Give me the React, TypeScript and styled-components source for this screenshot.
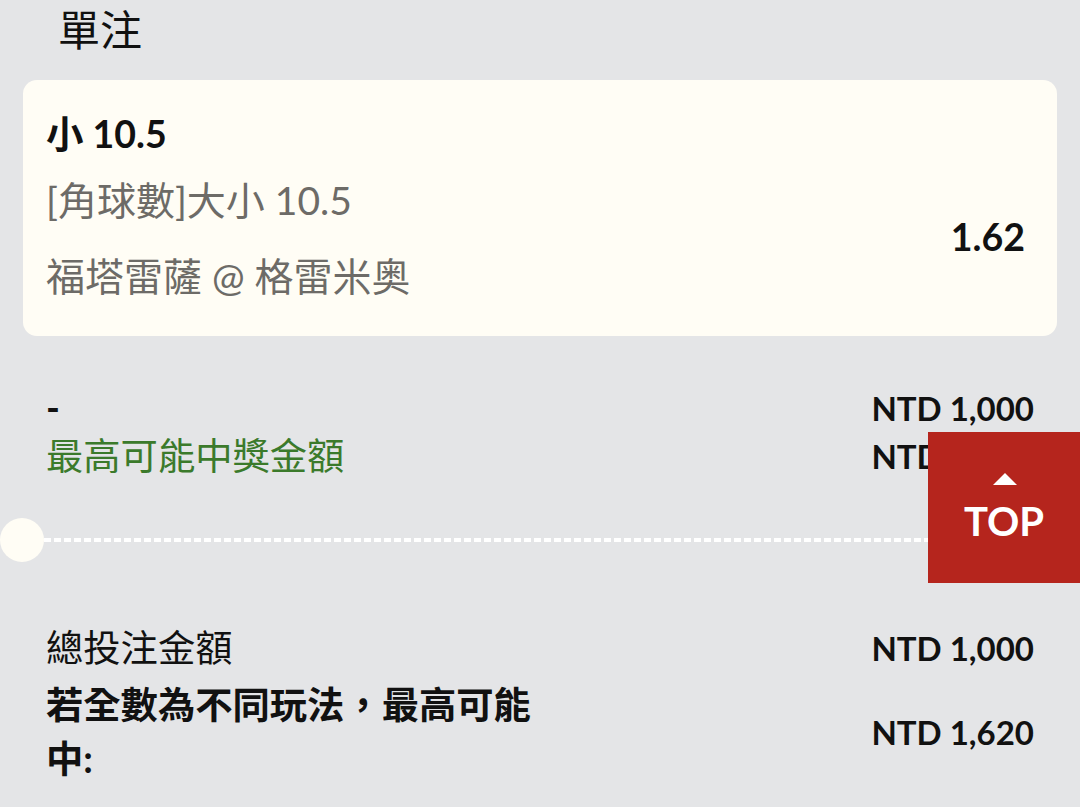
import React from 'react';
import styled, { createGlobalStyle } from 'styled-components';

const GlobalStyle = createGlobalStyle`
  html, body {
    margin: 0;
    padding: 0;
    background: #e4e5e7;
  }
  body {
    font-family: Lato, 'Noto Sans CJK TC', sans-serif;
    color: #111;
    overflow: hidden;
  }
`;

const Page = styled.div`
  width: 1080px;
  height: 807px;
  position: relative;
  overflow: hidden;
`;

const Title = styled.div`
  height: 60px;
  line-height: 60px;
  padding-left: 58px;
  margin-bottom: 20px;
  font-size: 42px;
`;

const Card = styled.div`
  margin: 0 23px;
  height: 256px;
  box-sizing: border-box;
  padding: 29px 32px 0 23px;
  background: #fffdf5;
  border-radius: 14px;
  display: flex;
  justify-content: space-between;
`;

const CardInfo = styled.div`
  display: flex;
  flex-direction: column;
`;

const Selection = styled.div`
  font-size: 37.5px;
  font-weight: 700;
  line-height: 50px;
  margin-bottom: 16px;
`;

const SubLine = styled.div<{ $gap?: number }>`
  font-size: 39px;
  line-height: 50px;
  color: #6d6b67;
  margin-bottom: ${(p) => p.$gap ?? 0}px;
`;

const Odds = styled.div`
  font-size: 37.5px;
  font-weight: 700;
  line-height: 50px;
  margin-top: 103px;
`;

const Rows = styled.div<{ $top: number }>`
  padding: 0 46px;
  margin-top: ${(p) => p.$top}px;
`;

const Row = styled.div<{ $height?: number; $top?: number }>`
  display: flex;
  justify-content: space-between;
  align-items: center;
  min-height: ${(p) => p.$height ?? 48}px;
  margin-top: ${(p) => p.$top ?? 0}px;
`;

const Label = styled.div<{ $green?: boolean; $bold?: boolean }>`
  font-size: 37.3px;
  line-height: 48px;
  color: ${(p) => (p.$green ? '#3b7a2b' : '#111')};
  font-weight: ${(p) => (p.$bold ? 700 : 400)};
`;

const BoldLabel = styled.div`
  width: 500px;
  font-size: 37.3px;
  line-height: 54px;
  font-weight: 700;
`;

const Amount = styled.div`
  font-size: 33px;
  font-weight: 700;
  line-height: 48px;
  white-space: nowrap;
`;

const Divider = styled.div`
  display: flex;
  align-items: center;
  height: 44px;
  margin-top: 38px;
  margin-bottom: 62px;
`;

const Notch = styled.div`
  width: 44px;
  height: 44px;
  border-radius: 50%;
  background: #fffdf5;
  flex-shrink: 0;
`;

const Dashes = styled.div`
  flex: 1;
  height: 4px;
  background-image: linear-gradient(to right, #ffffff 0 7px, transparent 7px 10px);
  background-size: 10px 4px;
  background-repeat: repeat-x;
`;

const TopButton = styled.button`
  position: absolute;
  right: 0;
  top: 432px;
  width: 152px;
  height: 151px;
  border: none;
  padding: 0;
  background: #b5251d;
  color: #fff;
  display: flex;
  flex-direction: column;
  align-items: center;
  justify-content: center;
  font-family: Lato, sans-serif;
  font-weight: 700;
  font-size: 40px;
  line-height: 44px;
  cursor: pointer;
`;

const Arrow = styled.div`
  width: 0;
  height: 0;
  border-left: 12px solid transparent;
  border-right: 12px solid transparent;
  border-bottom: 12px solid #fff;
  margin-bottom: 14px;
  margin-left: 2px;
`;

export default function App() {
  return (
    <Page>
      <GlobalStyle />
      <Title>單注</Title>
      <Card>
        <CardInfo>
          <Selection>小 10.5</Selection>
          <SubLine $gap={26}>[角球數]大小 10.5</SubLine>
          <SubLine>福塔雷薩 @ 格雷米奥</SubLine>
        </CardInfo>
        <Odds>1.62</Odds>
      </Card>

      <Rows $top={48}>
        <Row>
          <Label $bold>-</Label>
          <Amount>NTD 1,000</Amount>
        </Row>
        <Row>
          <Label $green>最高可能中獎金額</Label>
          <Amount>NTD 1,620</Amount>
        </Row>
      </Rows>

      <Divider>
        <Notch />
        <Dashes />
      </Divider>

      <Rows $top={0}>
        <Row>
          <Label>總投注金額</Label>
          <Amount>NTD 1,000</Amount>
        </Row>
        <Row $height={108} $top={6}>
          <BoldLabel>若全數為不同玩法，最高可能中:</BoldLabel>
          <Amount>NTD 1,620</Amount>
        </Row>
      </Rows>

      <TopButton>
        <Arrow />
        TOP
      </TopButton>
    </Page>
  );
}
